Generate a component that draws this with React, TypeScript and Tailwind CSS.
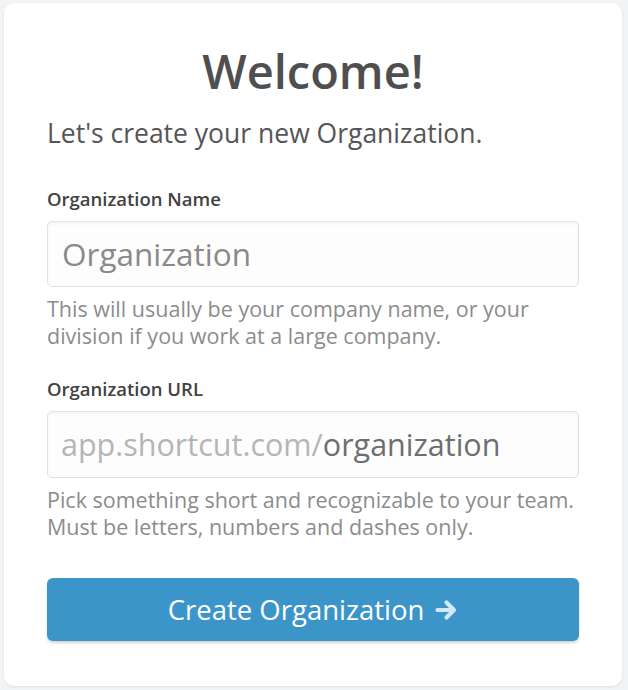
import React from 'react';

const ArrowIcon: React.FC = () => (
    <svg width="24" height="24" viewBox="0 0 24 24" fill="none" className="mt-[1px]">
        <path
            d="M3.5 12H19M12.5 4.5L20 12L12.5 19.5"
            stroke="#d3e8f4"
            strokeWidth="4.2"
            strokeLinecap="round"
            strokeLinejoin="round"
        />
    </svg>
);

const App: React.FC = () => {
    return (
        <div
            className="min-h-[690px] w-full bg-[#f2f3f5] pt-[3px] pl-[4px] pr-[6px] pb-[4px]"
            style={{ fontFamily: '"Open Sans", "Noto Sans", sans-serif' }}
        >
            <div className="h-[683px] rounded-[10px] bg-white shadow-[0_1px_3px_rgba(0,0,0,0.08)] px-[43px] pt-[36px]">
                {/* Encabezado */}
                <h1 className="text-center text-[47px] leading-[64px] font-semibold text-[#4f4f4f]">
                    Welcome!
                </h1>
                <p className="mt-[12px] text-[26.5px] leading-[36px] text-[#555555]">
                    Let's create your new Organization.
                </p>

                {/* Nombre */}
                <label className="mt-[36px] block text-[18.5px] leading-[24px] font-semibold text-[#424242]">
                    Organization Name
                </label>
                <div className="mt-[10px] h-[66px] rounded-[5px] border border-[#e2e2e2] bg-[#fdfdfd] shadow-[inset_0_2px_3px_rgba(0,0,0,0.04)] flex items-center px-[14px]">
                    <span className="text-[31.5px] text-[#8a8a8a]">Organization</span>
                </div>
                <p className="mt-[8px] text-[21.5px] leading-[27px] text-[#8c8c8c]">
                    This will usually be your company name, or your
                    <br />
                    division if you work at a large company.
                </p>

                {/* URL */}
                <label className="mt-[28px] block text-[18.5px] leading-[24px] font-semibold text-[#424242]">
                    Organization URL
                </label>
                <div className="mt-[10px] h-[67px] rounded-[5px] border border-[#e2e2e2] bg-[#fdfdfd] shadow-[inset_0_2px_3px_rgba(0,0,0,0.04)] flex items-center px-[13px]">
                    <span className="text-[30.5px] text-[#b5b5b5]">app.shortcut.com/</span>
                    <span className="text-[30.5px] text-[#6e6e6e]">organization</span>
                </div>
                <p className="mt-[8px] text-[21.5px] leading-[27px] text-[#8c8c8c]">
                    Pick something short and recognizable to your team.
                    <br />
                    Must be letters, numbers and dashes only.
                </p>

                {/* Botón */}
                <button className="mt-[38px] w-full h-[63px] rounded-[6px] bg-[#3c95c9] shadow-[0_2px_3px_rgba(0,0,0,0.18)] flex items-center justify-center gap-[10px] text-white text-[27.5px]">
                    <span>Create Organization</span>
                    <ArrowIcon />
                </button>
            </div>
        </div>
    );
};

export default App;
